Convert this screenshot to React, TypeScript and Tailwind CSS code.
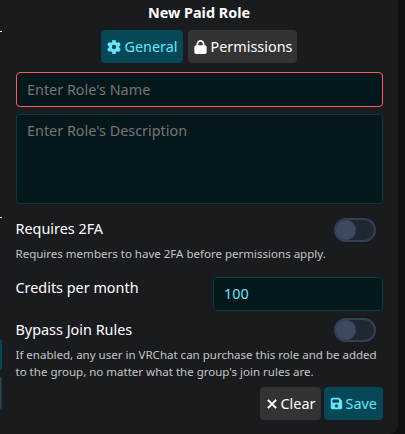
import { ReactNode, useState } from "react";
import { FaFloppyDisk, FaGear, FaLock, FaXmark } from "react-icons/fa6";

const Toggle = ({
  checked,
  onChange,
}: {
  checked: boolean;
  onChange: () => void;
}) => {
  return (
    <button
      role="switch"
      aria-checked={checked}
      onClick={onChange}
      className={`flex h-6 w-[42px] shrink-0 items-center rounded-full border-2 border-[#333f54] bg-[#1f2733] ${
        checked ? "justify-end" : "justify-start"
      }`}
    >
      <span className="size-5 rounded-full bg-[#3d4960]" />
    </button>
  );
};

const ActionButton = ({
  children,
  className,
  onClick,
}: {
  children: ReactNode;
  className: string;
  onClick?: () => void;
}) => {
  return (
    <button
      onClick={onClick}
      className={`flex h-[33px] items-center rounded whitespace-nowrap ${className}`}
    >
      {children}
    </button>
  );
};

const App = () => {
  const [name, setName] = useState("");
  const [description, setDescription] = useState("");
  const [credits, setCredits] = useState("100");
  const [requires2FA, setRequires2FA] = useState(false);
  const [bypassJoin, setBypassJoin] = useState(false);

  const clear = () => {
    setName("");
    setDescription("");
    setCredits("100");
    setRequires2FA(false);
    setBypassJoin(false);
  };

  return (
    <div className="flex h-[434px] w-[405px] overflow-hidden bg-[#0f1012] font-['Noto_Sans',sans-serif] text-[14.4px] text-white">
      <div className="flex h-[434px] w-[398px] rounded-br-lg bg-[#1a1b1e]">
        {/* edge of the neighbouring column */}
        <div className="w-[2px] shrink-0">
          <div className="mt-[31px] h-px bg-white" />
          <div className="mt-[185px] h-px bg-white" />
          <div className="mt-[121px] h-[31px] rounded-r-sm bg-[#064556]" />
          <div className="mt-[7px] h-[32px] rounded-r-sm border-r border-[#064556] bg-[#3a3c42]" />
        </div>

        <div className="ml-[13.5px] w-[367px] shrink-0">
          <h1 className="h-[30px] pt-[3px] text-center leading-5 font-bold">
            New Paid Role
          </h1>

          <div className="flex justify-center gap-[5px] pr-[1px]">
            <ActionButton className="w-[82px] gap-[4px] bg-[#074857] pl-[6px] text-[#66e5ff]">
              <FaGear className="size-[14px] shrink-0" />
              General
            </ActionButton>
            <ActionButton className="w-[109px] gap-[4px] bg-[#333333] pl-[6px]">
              <FaLock className="h-[14px] w-[13px] shrink-0" />
              Permissions
            </ActionButton>
          </div>

          <input
            value={name}
            onChange={(e) => setName(e.target.value)}
            placeholder="Enter Role's Name"
            className="mt-[9px] block h-[35px] w-full rounded border border-[#ff5964] bg-[#04171b] px-[10.5px] outline-none placeholder:text-[#757575]"
          />
          <textarea
            value={description}
            onChange={(e) => setDescription(e.target.value)}
            placeholder="Enter Role's Description"
            className="mt-[7px] block h-[90px] w-full resize-none rounded border border-[#053c46] bg-[#04171b] px-[10.5px] py-[6px] leading-5 outline-none placeholder:text-[#757575]"
          />

          <div className="mt-[14px] flex h-6 items-start justify-between pr-[7px]">
            <span className="leading-[22px]">Requires 2FA</span>
            <Toggle
              checked={requires2FA}
              onChange={() => setRequires2FA(!requires2FA)}
            />
          </div>
          <p className="mt-1 h-[31px] text-[11.52px] leading-4 text-[#c4c5c6]">
            Requires members to have 2FA before permissions apply.
          </p>

          <div className="flex h-[34px] items-start justify-between">
            <span className="leading-[22px]">Credits per month</span>
            <input
              value={credits}
              onChange={(e) => setCredits(e.target.value)}
              className="h-[34px] w-[170px] rounded border border-[#053c46] bg-[#04171b] px-[10.5px] pb-[2px] text-[#66e5ff] outline-none"
            />
          </div>

          <div className="mt-[7px] flex h-6 items-start justify-between pr-[7px]">
            <span className="leading-6">Bypass Join Rules</span>
            <Toggle
              checked={bypassJoin}
              onChange={() => setBypassJoin(!bypassJoin)}
            />
          </div>
          <p className="mt-1 h-[41px] w-[370px] text-[11.52px] leading-[17px] text-[#c4c5c6]">
            If enabled, any user in VRChat can purchase this role and be added
            to the group, no matter what the group's join rules are.
          </p>

          <div className="flex justify-end gap-[3px]">
            <ActionButton
              onClick={clear}
              className="w-[61px] gap-[2px] bg-[#333333] pl-[5px]"
            >
              <FaXmark
                className="size-[14px] shrink-0 stroke-current"
                strokeWidth={16}
              />
              Clear
            </ActionButton>
            <ActionButton className="w-[59px] gap-[3px] bg-[#074857] pl-[6px] text-[#66e5ff]">
              <FaFloppyDisk className="size-[13px] shrink-0" />
              Save
            </ActionButton>
          </div>
        </div>
      </div>
    </div>
  );
};

export default App;
